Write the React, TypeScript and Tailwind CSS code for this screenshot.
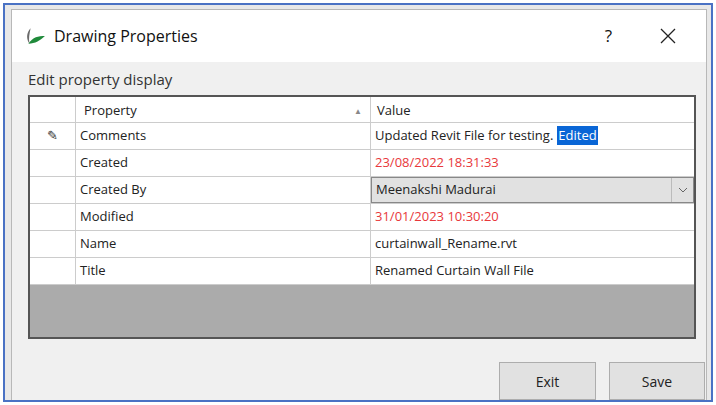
export default function App() {
  const rows: { name: string; value: string; red?: boolean; combo?: boolean; edit?: boolean }[] = [
    { name: "Comments", value: "Updated Revit File for testing.", edit: true },
    { name: "Created", value: "23/08/2022 18:31:33", red: true },
    { name: "Created By", value: "Meenakshi Madurai", combo: true },
    { name: "Modified", value: "31/01/2023 10:30:20", red: true },
    { name: "Name", value: "curtainwall_Rename.rvt" },
    { name: "Title", value: "Renamed Curtain Wall File" },
  ];
  return (
    <div
      className="w-[716px] h-[405px] bg-white p-[3px]"
      style={{ fontFamily: '"Segoe UI", "Open Sans", "Noto Sans", sans-serif' }}
    >
      <div className="w-full h-full border-2 border-[#4a72c4] bg-[#e8e8e8] pl-[6px] pr-[4px] pt-[4px]">
        <div className="h-full border border-[#b8b8b8] border-b-0 bg-[#f0f0f0] flex flex-col">
          <div className="h-[52px] bg-white flex items-center px-3 text-[16px] text-[#111]">
            <svg width="22" height="20" viewBox="0 0 20 18" className="mr-2">
              <path d="M6 2 C2 6 2 12 5 16 C4 11 5 7 6 2Z" fill="#6b6b6b" />
              <path d="M4 16 C8 10 13 9 19 9 C15 13 10 16 4 16Z" fill="#1f8a3a" />
            </svg>
            <span>Drawing Properties</span>
            <span className="ml-auto mr-[48px] text-[17px]">?</span>
            <svg width="16" height="16" viewBox="0 0 16 16" className="mr-[18px]">
              <path d="M1 1 L15 15 M15 1 L1 15" stroke="#222" strokeWidth="1.3" />
            </svg>
          </div>
          <div className="px-[16px] pt-[6px] text-[15px] text-[#333]">Edit property display</div>
          <div className="ml-[16px] mr-[10px] mt-[4px] h-[244px] border-2 border-[#555] bg-[#ababab] text-[13px] text-[#222] flex flex-col">
            <div className="flex h-[26px] bg-white border-b border-[#ccc]">
              <div className="w-[46px] border-r border-[#ccc]" />
              <div className="w-[295px] border-r border-[#ccc] px-2 pt-[3px] flex items-center">
                <span>Property</span>
                <span className="ml-auto text-[8px] text-[#888]">▲</span>
              </div>
              <div className="flex-1 px-[6px] pt-[3px] flex items-center">Value</div>
            </div>
            {rows.map((r) => (
              <div key={r.name} className="flex h-[27px] bg-white border-b border-[#ccc]">
                <div className="w-[46px] border-r border-[#ccc] flex items-center justify-center text-[#333]">
                  {r.edit ? "✎" : ""}
                </div>
                <div className="w-[295px] border-r border-[#ccc] px-[4px] flex items-center">{r.name}</div>
                {r.combo ? (
                  <div className="flex-1 flex items-center bg-[#e1e1e1] border border-[#888]">
                    <span className="px-[4px] flex-1">{r.value}</span>
                    <span className="w-[22px] h-full border-l border-[#bbb] flex items-center justify-center">
                      <svg width="10" height="6" viewBox="0 0 10 6"><path d="M1 1 L5 5 L9 1" stroke="#666" fill="none" /></svg>
                    </span>
                  </div>
                ) : (
                  <div className={`flex-1 px-[4px] flex items-center ${r.red ? "text-[#e8383b]" : ""}`}>
                    {r.value}
                    {r.edit && <span className="ml-[4px] bg-[#0a66d6] text-white px-[1px]">Edited</span>}
                  </div>
                )}
              </div>
            ))}
          </div>
          <div className="flex justify-end gap-[13px] mt-auto pr-[1px] text-[14px] text-[#222]">
            <div className="w-[97px] h-[38px] bg-[#e1e1e1] border border-[#adadad] flex items-center justify-center">Exit</div>
            <div className="w-[96px] h-[38px] bg-[#e1e1e1] border border-[#adadad] flex items-center justify-center">Save</div>
          </div>
        </div>
      </div>
    </div>
  );
}
